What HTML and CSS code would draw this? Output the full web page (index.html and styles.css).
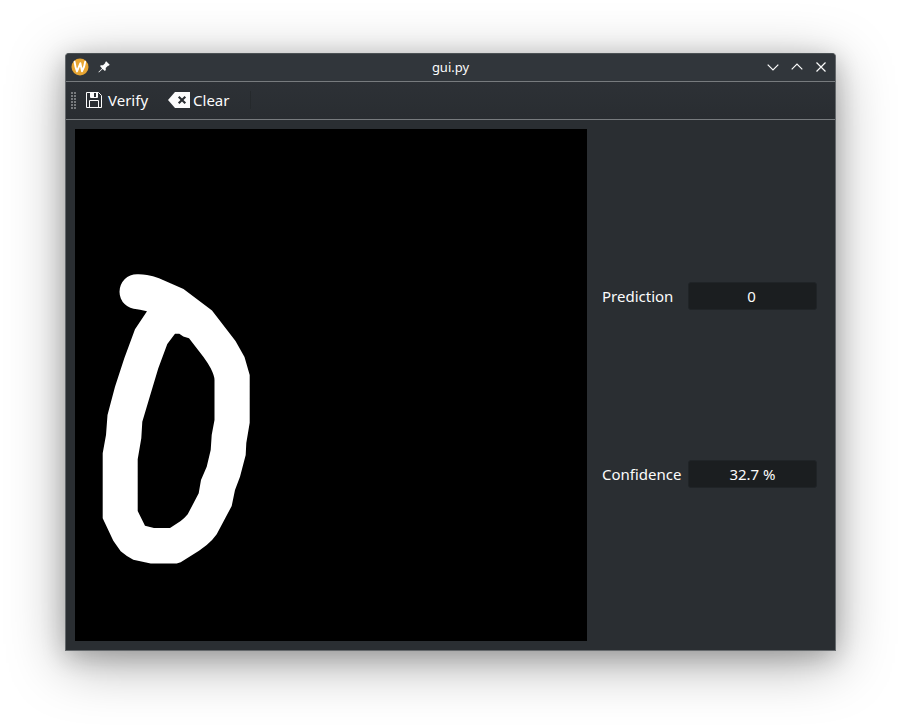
FILE: index.html
```html
<!DOCTYPE html>
<html lang="en">
<head>
<meta charset="utf-8">
<title>gui.py</title>
<link rel="stylesheet" href="styles.css">
</head>
<body>
<main class="window">
  <header class="titlebar">
    <div class="title-icons">
      <svg width="18" height="18" viewBox="0 0 18 18"><circle cx="9" cy="9" r="8.5" fill="#e7a532"/><path d="M3.6 3.8Q4.2 9 6 13.4L9.4 5.2 11 13.2Q13.6 9 14.2 3.6" fill="none" stroke="#fff" stroke-width="1.9" stroke-linejoin="round" stroke-linecap="round"/></svg>
      <svg width="12" height="12" viewBox="0 0 12 12" fill="#fcfcfc"><path d="M8.2.3 11.7 3.8 10.7 4.8 10 4.7 7.7 7 7.8 9.1 6.9 10 4.6 7.9.9 11.6.4 11.1 4.1 7.4 2 5.1 2.9 4.2 5 4.3 7.3 2 7.2 1.3Z"/></svg>
    </div>
    <h1 class="title">gui.py</h1>
    <div class="controls">
      <svg width="12" height="12" viewBox="0 0 12 12"><path d="M.7 3.7 6 9 11.3 3.7"/></svg>
      <svg width="12" height="12" viewBox="0 0 12 12"><path d="M.7 8.3 6 3 11.3 8.3"/></svg>
      <svg width="12" height="12" viewBox="0 0 12 12"><path d="M1.5 1.5 10.5 10.5M10.5 1.5 1.5 10.5"/></svg>
    </div>
  </header>
  <nav class="toolbar">
    <span class="grip"></span>
    <button class="tool verify">
      <svg width="16" height="16" viewBox="0 0 16 16" fill="none" stroke="#fcfcfc"><path d="M.5.5H12.5L15.5 3.5V15.5H.5ZM4.5.5V5.5H11.5V.5M3.5 15.5V8.5H12.5V15.5"/><path d="M5 1H8V5H5ZM10 1H12V5H10Z" fill="#fcfcfc" stroke="none"/></svg>
      Verify
    </button>
    <button class="tool clear">
      <svg width="22" height="16" viewBox="0 0 22 16"><path d="M0 8 7 0H22V16H7Z" fill="#fcfcfc"/><path d="M10.7 4.7 17.3 11.3M17.3 4.7 10.7 11.3" stroke="#2a2e32" stroke-width="2.1"/></svg>
      Clear
    </button>
    <span class="divider"></span>
  </nav>
  <section class="content">
    <svg class="canvas" width="512" height="512" viewBox="75 129 512 512">
      <path fill="#fff" fill-rule="evenodd" d="M137 274.2Q142 274 147 275 153 276 159 278.3L171 283.5 183.5 289 212 310.5 235.5 341 244.5 357 249.7 375V422.7L246.3 443 245.7 455 240 476.7 235 490 231.7 506 216.7 534.3Q212 541 206.7 545L199 550.7 180.7 562.3 176.7 563.5H150.7L133.3 559.7Q126 556 120.7 551.3L113.3 540.7 102.7 518.3V453.3L106 435 107.5 415 115 386.7 124.3 358.3 135 329.3 147 311.3 140 309.7 137 309.2A17.5 17.5 0 0 1 119.5 291.7 17.5 17.5 0 0 1 137 274.2ZM175 333.7H179.3L183.3 336.5 189 338.3 203.3 356.7Q208 363 210.7 368.3 214.5 376 214.5 380V420L211.7 435 210.7 450 206.7 466.7 201 480 198.7 493.3 187.7 514.3Q184 518.8 180.7 521L170 528H154L145 525.7 137.7 511V459.3L141.3 438.3 142.3 421.7 149.3 398.3 158.3 368.3 167.3 344Z"/>
    </svg>
    <div class="results">
      <div class="row"><span class="label">Prediction</span><output class="field zero">0</output></div>
      <div class="row"><span class="label">Confidence</span><output class="field">32.7 %</output></div>
    </div>
  </section>
</main>
</body>
</html>
```
FILE: styles.css
```css
* { box-sizing: border-box; }
body {
  margin: 0;
  height: 728px;
  padding: 53px 65px 77px;
  background: #fff;
  overflow: hidden;
  font: 15px/20px "Noto Sans", sans-serif;
  color: #fcfcfc;
}
svg { display: block; flex: none; }
.window {
  width: 771px;
  height: 598px;
  border: 1px solid #65696c;
  border-top-color: #4b5154;
  border-radius: 4px 4px 0 0;
  background: #2a2e32;
  box-shadow: 0 12px 56px rgba(0, 0, 0, .34), 0 6px 24px rgba(0, 0, 0, .2);
}
.titlebar {
  display: grid;
  grid-template-columns: 1fr auto 1fr;
  align-items: center;
  height: 28px;
  padding: 0 8px 1px 5px;
  border-bottom: 1px solid #777b7e;
  border-radius: 3px 3px 0 0;
  background: #31363b;
}
.title-icons { display: flex; align-items: center; gap: 9px; }
.title { margin: 0; padding-left: 3px; font-size: 13px; font-weight: 400; line-height: 18px; }
.controls { display: flex; justify-content: flex-end; gap: 12px; }
.controls path { fill: none; stroke: #fcfcfc; stroke-width: 1.2; }
.toolbar {
  display: flex;
  align-items: center;
  height: 38px;
  padding: 0 0 1px 5px;
  border-bottom: 1px solid #777b7e;
  background: linear-gradient(#2d3136, #292d31);
}
.grip {
  width: 5px;
  height: 17px;
  background: repeating-linear-gradient(transparent 0 2px, #2b2f33 2px 3px), linear-gradient(90deg, #777a7d 2px, transparent 2px 3px, #777a7d 3px);
}
.tool {
  display: flex;
  align-items: center;
  padding: 0;
  border: 0;
  background: none;
  color: inherit;
  font: inherit;
}
.verify { gap: 6px; margin-left: 10px; }
.clear { gap: 3px; margin-left: 20px; }
.divider { width: 1px; height: 18px; margin-left: 21px; background: #25292c; }
.content { display: flex; padding: 9px 18px 9px 9px; }
.canvas { background: #000; }
.results {
  display: flex;
  flex-direction: column;
  gap: 150px;
  flex: 1;
  padding: 153px 0 0 15px;
}
.row { display: flex; height: 28px; align-items: center; }
.label { width: 86px; }
.field {
  width: 129px;
  height: 28px;
  border: 1px solid #202427;
  border-radius: 3px;
  background: #1b1e20;
  line-height: 27px;
  text-align: center;
}
.zero { padding-right: 2px; }
```
